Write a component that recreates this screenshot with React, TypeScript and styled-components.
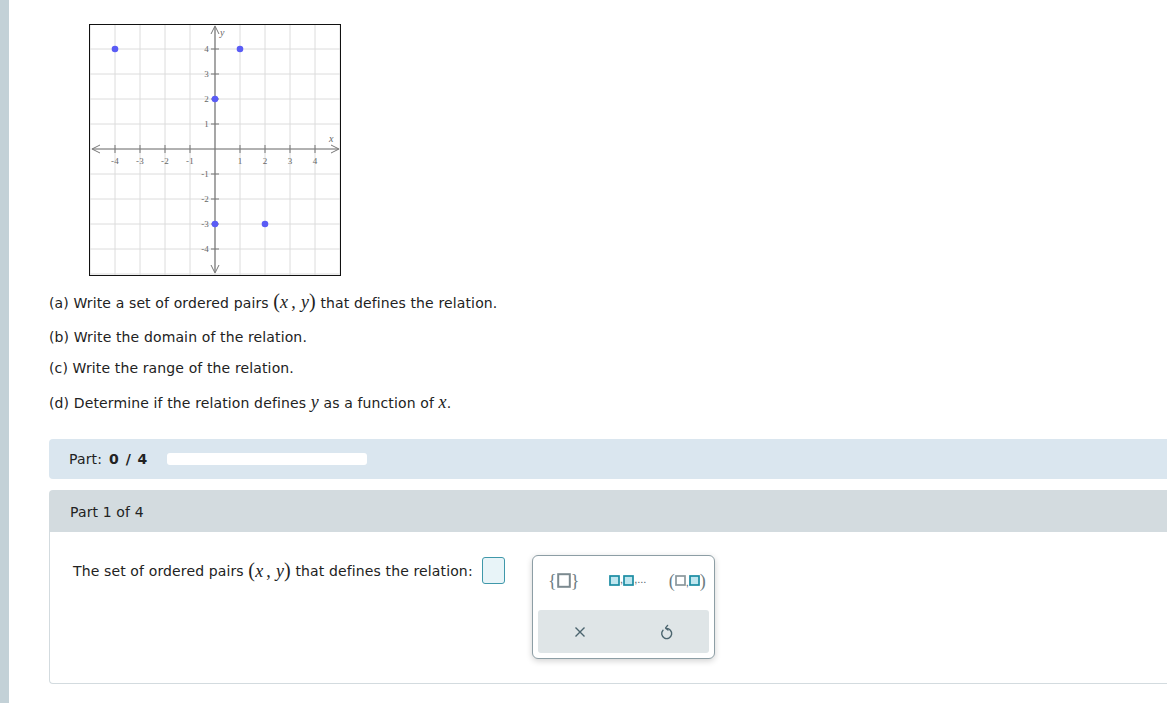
import React from "react";
import styled, { createGlobalStyle } from "styled-components";

const GlobalStyle = createGlobalStyle`
  html, body {
    margin: 0;
    padding: 0;
    background: #ffffff;
    overflow: hidden;
  }
  body {
    font-family: "DejaVu Sans", Verdana, sans-serif;
    font-size: 14px;
    letter-spacing: 0.13px;
    color: #222;
  }
`;

const UNIT = 25;
const ORIGIN_X = 126;
const ORIGIN_Y = 125;
const points: [number, number][] = [
  [-4, 4],
  [1, 4],
  [0, 2],
  [0, -3],
  [2, -3],
];

const px = (x: number) => ORIGIN_X + x * UNIT;
const py = (y: number) => ORIGIN_Y - y * UNIT;

const Graph = () => {
  const ticks = [-4, -3, -2, -1, 1, 2, 3, 4];
  const grid = [-5, -4, -3, -2, -1, 0, 1, 2, 3, 4, 5];
  return (
    <GraphFrame>
      <svg width="250" height="250" viewBox="1 1 250 250">
        {grid.map((k) => (
          <g key={k}>
            <line x1={px(k)} y1={0} x2={px(k)} y2={252} stroke="#dcdcdc" strokeWidth="1" />
            <line x1={0} y1={py(k)} x2={252} y2={py(k)} stroke="#dcdcdc" strokeWidth="1" />
          </g>
        ))}
        <line x1={4} y1={ORIGIN_Y} x2={249} y2={ORIGIN_Y} stroke="#777" strokeWidth="1.2" />
        <line x1={ORIGIN_X} y1={3} x2={ORIGIN_X} y2={248} stroke="#777" strokeWidth="1.2" />
        <polyline points="11,121 3,125 11,129" fill="none" stroke="#777" strokeWidth="1" />
        <polyline points="242,121 250,125 242,129" fill="none" stroke="#777" strokeWidth="1" />
        <polyline points="122,10 126,2 130,10" fill="none" stroke="#777" strokeWidth="1" />
        <polyline points="122,241 126,249 130,241" fill="none" stroke="#777" strokeWidth="1" />
        {ticks.map((k) => (
          <g key={`t${k}`}>
            <line x1={px(k)} y1={ORIGIN_Y - 4} x2={px(k)} y2={ORIGIN_Y + 4} stroke="#777" />
            <line x1={ORIGIN_X - 4} y1={py(k)} x2={ORIGIN_X + 4} y2={py(k)} stroke="#777" />
            <text
              x={px(k)}
              y={ORIGIN_Y + 15}
              textAnchor="middle"
              fontSize="9"
              fontFamily="Liberation Serif, serif"
              fill="#666"
            >
              {k < 0 ? `-${-k}` : k}
            </text>
            <text
              x={ORIGIN_X - 6}
              y={py(k) + 3}
              textAnchor="end"
              fontSize="9"
              fontFamily="Liberation Serif, serif"
              fill="#666"
            >
              {k < 0 ? `-${-k}` : k}
            </text>
          </g>
        ))}
        <text x={131} y={12} fontSize="10" fontStyle="italic" fontFamily="Liberation Serif, serif" fill="#666">
          y
        </text>
        <text x={240} y={118} fontSize="10" fontStyle="italic" fontFamily="Liberation Serif, serif" fill="#666">
          x
        </text>
        {points.map(([x, y]) => (
          <circle key={`${x},${y}`} cx={px(x)} cy={py(y)} r="3.3" fill="#5a5cf5" />
        ))}
      </svg>
    </GraphFrame>
  );
};

const Pair = () => (
  <MathSpan>
    <Paren>(</Paren>
    <I>x</I>
    <Comma>,</Comma>
    <I>y</I>
    <Paren>)</Paren>
  </MathSpan>
);

const BoxGlyph = ({ filled, big }: { filled?: boolean; big?: boolean }) => (
  <svg width={big ? 14 : 11} height={big ? 15 : 11} viewBox={big ? "0 0 14 15" : "0 0 11 11"}>
    {big ? (
      <rect x="1.2" y="1.2" width="11.6" height="12.6" fill="#ffffff" stroke="#7c8a90" strokeWidth="2" />
    ) : (
      <rect
        x="1"
        y="1"
        width="9"
        height="9"
        fill={filled ? "#bfe6ef" : "#ffffff"}
        stroke={filled ? "#1a8ca3" : "#8a979c"}
        strokeWidth="1.7"
      />
    )}
  </svg>
);

export default function App() {
  return (
    <>
      <GlobalStyle />
      <Page>
        <Stripe />
        <Main>
          <Graph />
          <Questions>
            <Question $height={34}>
              (a) Write a set of ordered pairs <Pair /> that defines the relation.
            </Question>
            <Question $height={31}>(b) Write the domain of the relation.</Question>
            <Question $height={35}>(c) Write the range of the relation.</Question>
            <Question $height={20}>
              (d) Determine if the relation defines <I>y</I> as a function of <I>x</I>.
            </Question>
          </Questions>

          <ProgressBar>
            Part: <strong>0 / 4</strong>
            <Track />
          </ProgressBar>

          <PartCard>
            <PartHeader>Part 1 of 4</PartHeader>
            <PartBody>
              <Prompt>
                The set of ordered pairs <Pair /> that defines the relation:
                <AnswerBox />
              </Prompt>
              <Keypad>
                <KeyRow>
                  <Key>
                    <Brace>{"{"}</Brace>
                    <BoxGlyph big />
                    <Brace>{"}"}</Brace>
                  </Key>
                  <Key>
                    <BoxGlyph filled />
                    <Small>,</Small>
                    <BoxGlyph filled />
                    <Small>,...</Small>
                  </Key>
                  <Key>
                    <Brace>(</Brace>
                    <BoxGlyph />
                    <Small>,</Small>
                    <BoxGlyph filled />
                    <Brace>)</Brace>
                  </Key>
                </KeyRow>
                <ActionRow>
                  <ActionKey>
                    <svg width="14" height="14" viewBox="0 0 14 14">
                      <path d="M2.5 2.5 L11.5 11.5 M11.5 2.5 L2.5 11.5" stroke="#4b646e" strokeWidth="1.4" fill="none" />
                    </svg>
                  </ActionKey>
                  <ActionKey>
                    <svg width="14" height="17" viewBox="0 0 14 17">
                      <path
                        d="M4 7.2 A5 5 0 1 0 7.2 5.6"
                        stroke="#4b646e"
                        strokeWidth="1.4"
                        fill="none"
                        strokeLinecap="round"
                      />
                      <path
                        d="M8.6 2.4 L6.6 4.9 L9 7"
                        stroke="#4b646e"
                        strokeWidth="1.4"
                        fill="none"
                        strokeLinecap="round"
                        strokeLinejoin="round"
                      />
                    </svg>
                  </ActionKey>
                </ActionRow>
              </Keypad>
            </PartBody>
          </PartCard>
        </Main>
      </Page>
    </>
  );
}

const Page = styled.div`
  display: flex;
  min-height: 703px;
  width: 1167px;
`;

const Stripe = styled.div`
  width: 9px;
  flex-shrink: 0;
  background: #c3d1d7;
`;

const Main = styled.div`
  flex: 1;
  padding: 24px 0 0 40px;
  min-width: 0;
`;

const GraphFrame = styled.div`
  width: 250px;
  height: 250px;
  margin-left: 40px;
  border: 1px solid #111;
  svg {
    display: block;
  }
`;

const Questions = styled.div`
  margin-top: 17px;
  margin-bottom: 26px;
`;

const Question = styled.p<{ $height: number }>`
  margin: 0;
  height: ${(p) => p.$height}px;
  line-height: 20px;
`;

const MathSpan = styled.span`
  font-family: "Liberation Serif", "Times New Roman", serif;
  font-size: 18px;
  line-height: 0;
`;

const Paren = styled.span`
  font-family: "Liberation Serif", serif;
  font-size: 20px;
  line-height: 0;
`;

const Comma = styled.span`
  margin: 0 5px 0 3px;
`;

const I = styled.i`
  font-family: "Liberation Serif", "Times New Roman", serif;
  font-size: 18px;
  line-height: 0;
`;

const ProgressBar = styled.div`
  display: flex;
  align-items: center;
  height: 40px;
  padding-left: 20px;
  background: #dae6ef;
  border-radius: 4px 0 0 4px;
  font-size: 14px;
  strong {
    margin-left: 7px;
    font-weight: bold;
    letter-spacing: 1px;
  }
`;

const Track = styled.div`
  width: 200px;
  height: 12px;
  margin-left: 19px;
  background: #ffffff;
  border-radius: 3px;
`;

const PartCard = styled.div`
  margin-top: 11px;
  border: 1px solid #d3dbdf;
  border-right: none;
  border-radius: 4px 0 0 4px;
`;

const PartHeader = styled.div`
  height: 41px;
  display: flex;
  align-items: center;
  padding-left: 20px;
  background: #d3dbdf;
  font-size: 14px;
`;

const PartBody = styled.div`
  display: flex;
  align-items: flex-start;
  padding: 23px 0 23px 23px;
  height: 105px;
`;

const Prompt = styled.div`
  display: flex;
  align-items: center;
  margin-top: 2px;
  font-size: 14px;
  white-space: pre;
`;

const AnswerBox = styled.span`
  display: inline-block;
  width: 21px;
  height: 25px;
  margin-left: 9px;
  border: 1px solid #3f98aa;
  border-radius: 3px;
  background: #e8f4f8;
`;

const Keypad = styled.div`
  margin-left: 27px;
  width: 183px;
  border: 1px solid #8d9ea5;
  border-radius: 6px;
  background: #ffffff;
  box-shadow: 0 2px 6px rgba(0, 0, 0, 0.18);
  padding: 0 5px 5px;
  box-sizing: border-box;
`;

const KeyRow = styled.div`
  display: grid;
  grid-template-columns: 52px 76px 1fr;
  height: 49px;
  margin-bottom: 5px;
  align-items: center;
`;

const Key = styled.div`
  display: flex;
  align-items: center;
  justify-content: center;
  color: #4b646e;
  letter-spacing: 0;
`;

const Brace = styled.span`
  font-family: "Liberation Serif", serif;
  font-size: 18px;
  color: #6c7c82;
  line-height: 1;
`;

const Small = styled.span`
  font-family: "Liberation Sans", Arial, sans-serif;
  font-size: 11px;
  line-height: 1;
  color: #4b646e;
  align-self: flex-end;
  margin-bottom: 2px;
`;

const ActionRow = styled.div`
  display: grid;
  grid-template-columns: 1fr 1fr;
  height: 43px;
  align-items: center;
  background: #dfe5e7;
  border-radius: 3px;
`;

const ActionKey = styled.div`
  display: flex;
  align-items: center;
  justify-content: center;
`;
